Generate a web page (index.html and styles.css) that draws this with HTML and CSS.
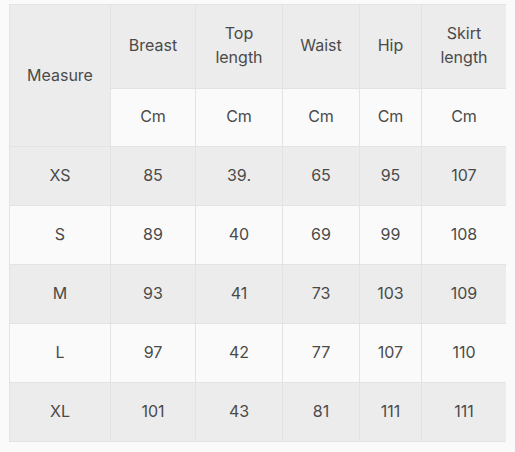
FILE: index.html
```html
<!DOCTYPE html>
<html>
<head>
<meta charset="utf-8">
<link rel="stylesheet" href="styles.css">
</head>
<body>
<table class="size-table">
  <colgroup>
    <col class="c1"><col class="c2"><col class="c3"><col class="c4"><col class="c5"><col class="c6">
  </colgroup>
  <tr class="head1 shade">
    <td rowspan="2" class="shade measure">Measure</td>
    <td>Breast</td>
    <td>Top<br>length</td>
    <td>Waist</td>
    <td>Hip</td>
    <td>Skirt<br>length</td>
  </tr>
  <tr class="head2 light">
    <td>Cm</td><td>Cm</td><td>Cm</td><td>Cm</td><td>Cm</td>
  </tr>
  <tr class="row shade"><td>XS</td><td>85</td><td>39.</td><td>65</td><td>95</td><td>107</td></tr>
  <tr class="row light"><td>S</td><td>89</td><td>40</td><td>69</td><td>99</td><td>108</td></tr>
  <tr class="row shade"><td>M</td><td>93</td><td>41</td><td>73</td><td>103</td><td>109</td></tr>
  <tr class="row light"><td>L</td><td>97</td><td>42</td><td>77</td><td>107</td><td>110</td></tr>
  <tr class="row shade"><td>XL</td><td>101</td><td>43</td><td>81</td><td>111</td><td>111</td></tr>
</table>
</body>
</html>
```
FILE: styles.css
```css
html, body {
  background: #fafafa;
}
body {
  margin: 4px 9px;
  font-family: Inter, "Open Sans", sans-serif;
  color: #4a4a4a;
}
.size-table {
  border-collapse: collapse;
  table-layout: fixed;
  width: 497px;
  font-size: 16px;
}
.c1 { width: 101px; }
.c2 { width: 85px; }
.c3 { width: 87px; }
.c4 { width: 77px; }
.c5 { width: 62px; }
.c6 { width: 85px; }
.size-table td {
  border: 1px solid #e3e3e3;
  text-align: center;
  vertical-align: middle;
  padding: 0 0 2px;
  line-height: 24px;
}
.shade td, td.shade { background: #ececec; }
.light td { background: #fafafa; }
.head1 td { height: 80px; padding-bottom: 3px; }
.head2 td { height: 54px; padding-bottom: 3px; }
.head1 td.measure { padding-bottom: 2px; }
.row td { height: 56px; }
```
